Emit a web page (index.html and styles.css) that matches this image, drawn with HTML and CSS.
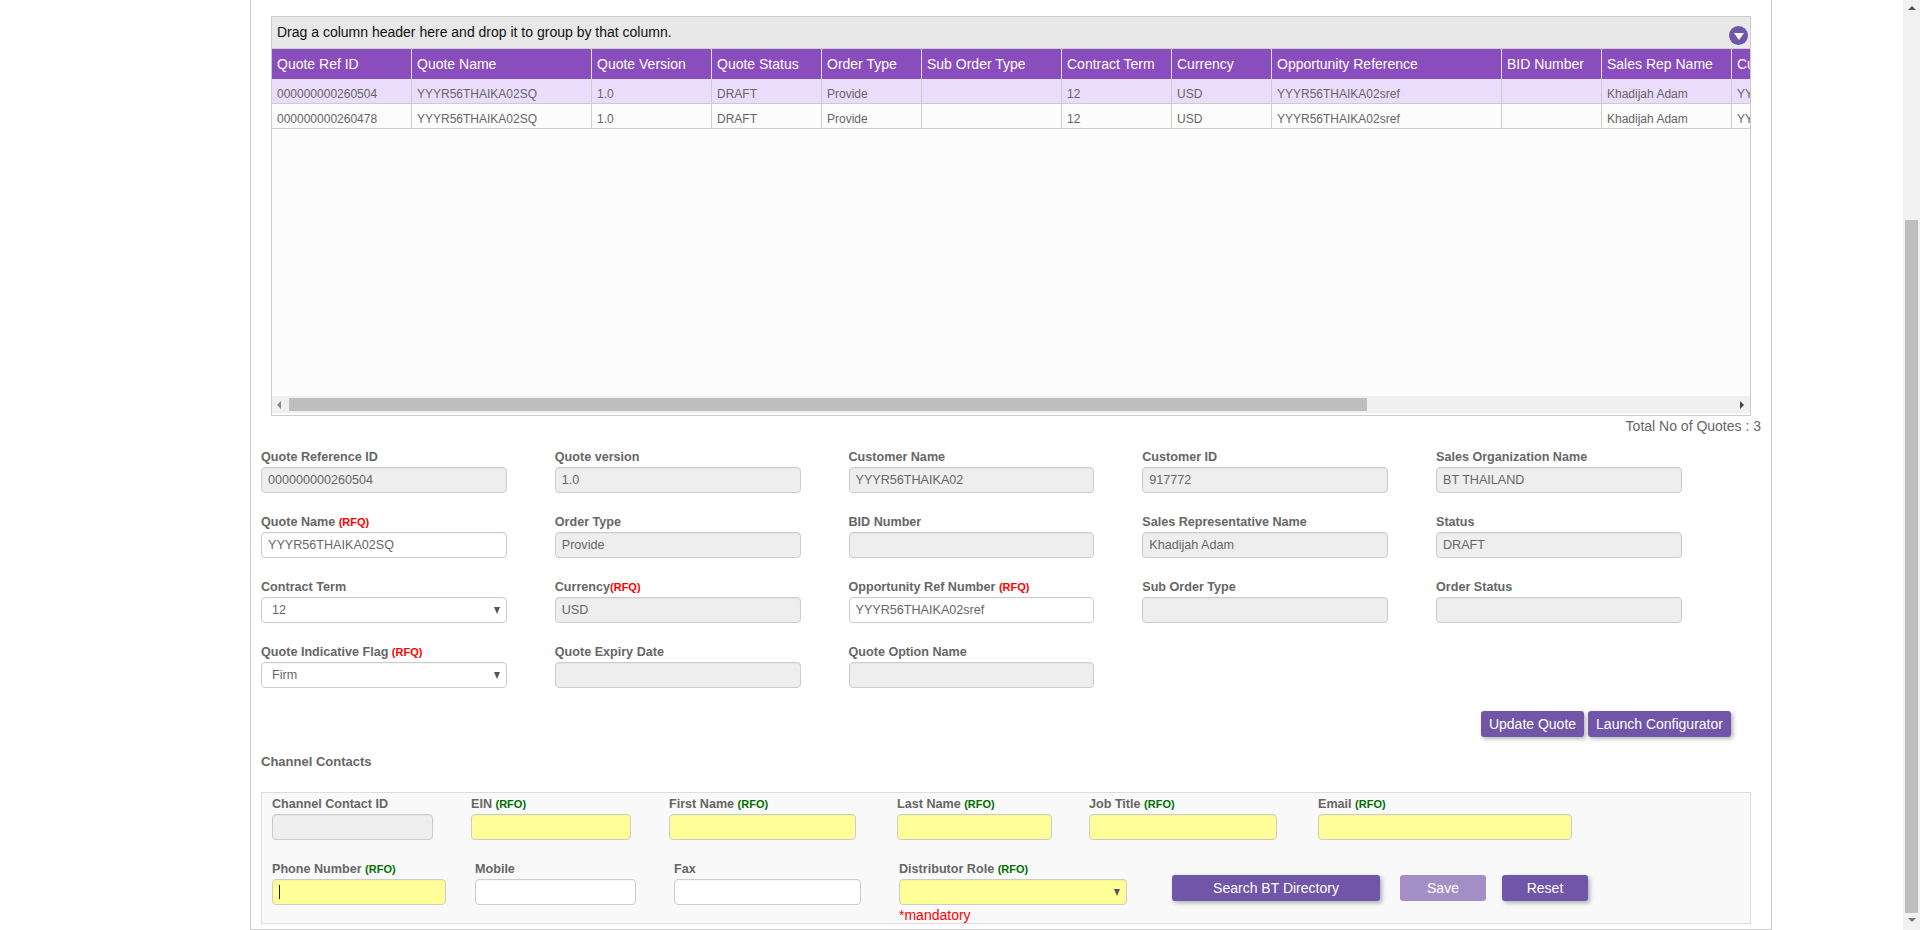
FILE: index.html
```html
<!DOCTYPE html>
<html lang="en">
<head>
<meta charset="utf-8">
<title>Quote Details</title>
<link rel="stylesheet" href="styles.css">
</head>
<body>
<div class="page">
  <main class="sheet">
    <section class="grid">
      <div class="group-panel">Drag a column header here and drop it to group by that column.<span class="collapse"><i></i></span></div>
      <div class="table-wrap">
        <table class="quotes">
          <colgroup>
            <col class="c140"><col class="c180"><col class="c120"><col class="c110"><col class="c100"><col class="c140"><col class="c110"><col class="c100"><col class="c230"><col class="c100"><col class="c130"><col class="c200">
          </colgroup>
          <thead>
            <tr><th>Quote Ref ID</th><th>Quote Name</th><th>Quote Version</th><th>Quote Status</th><th>Order Type</th><th>Sub Order Type</th><th>Contract Term</th><th>Currency</th><th>Opportunity Reference</th><th>BID Number</th><th>Sales Rep Name</th><th>Customer Name</th></tr>
          </thead>
          <tbody>
            <tr class="selected"><td>000000000260504</td><td>YYYR56THAIKA02SQ</td><td>1.0</td><td>DRAFT</td><td>Provide</td><td></td><td>12</td><td>USD</td><td>YYYR56THAIKA02sref</td><td></td><td>Khadijah Adam</td><td>YYYR56THAIKA02</td></tr>
            <tr><td>000000000260478</td><td>YYYR56THAIKA02SQ</td><td>1.0</td><td>DRAFT</td><td>Provide</td><td></td><td>12</td><td>USD</td><td>YYYR56THAIKA02sref</td><td></td><td>Khadijah Adam</td><td>YYYR56THAIKA02</td></tr>
          </tbody>
        </table>
      </div>
      <div class="hscroll">
        <span class="arrow-left"></span>
        <span class="hthumb"></span>
        <span class="arrow-right"></span>
      </div>
    </section>
    <p class="total">Total No of Quotes : 3</p>

    <form class="quote-form">
      <div class="field"><label>Quote Reference ID</label><input class="box" disabled value="000000000260504"></div>
      <div class="field"><label>Quote version</label><input class="box" disabled value="1.0"></div>
      <div class="field"><label>Customer Name</label><input class="box" disabled value="YYYR56THAIKA02"></div>
      <div class="field"><label>Customer ID</label><input class="box" disabled value="917772"></div>
      <div class="field"><label>Sales Organization Name</label><input class="box" disabled value="BT THAILAND"></div>

      <div class="field"><label>Quote Name <em class="rfq">(RFQ)</em></label><input class="box" value="YYYR56THAIKA02SQ"></div>
      <div class="field"><label>Order Type</label><input class="box" disabled value="Provide"></div>
      <div class="field"><label>BID Number</label><input class="box" disabled value=""></div>
      <div class="field"><label>Sales Representative Name</label><input class="box" disabled value="Khadijah Adam"></div>
      <div class="field"><label>Status</label><input class="box" disabled value="DRAFT"></div>

      <div class="field"><label>Contract Term</label><div class="select-wrap"><select class="box pick"><option>12</option></select></div></div>
      <div class="field"><label>Currency<em class="rfq">(RFQ)</em></label><input class="box" disabled value="USD"></div>
      <div class="field"><label>Opportunity Ref Number <em class="rfq">(RFQ)</em></label><input class="box" value="YYYR56THAIKA02sref"></div>
      <div class="field"><label>Sub Order Type</label><input class="box" disabled value=""></div>
      <div class="field"><label>Order Status</label><input class="box" disabled value=""></div>

      <div class="field"><label>Quote Indicative Flag <em class="rfq">(RFQ)</em></label><div class="select-wrap"><select class="box pick"><option>Firm</option></select></div></div>
      <div class="field"><label>Quote Expiry Date</label><input class="box" disabled value=""></div>
      <div class="field"><label>Quote Option Name</label><input class="box" disabled value=""></div>
    </form>

    <div class="form-actions">
      <button type="button" class="btn btn-update">Update Quote</button>
      <button type="button" class="btn btn-launch">Launch Configurator</button>
    </div>

    <h3 class="section-title">Channel Contacts</h3>

    <section class="contacts">
      <div class="contact-row">
        <div class="cfield w-id"><label>Channel Contact ID</label><input class="box" disabled value=""></div>
        <div class="cfield w-ein"><label>EIN <em class="rfo">(RFO)</em></label><input class="box req" value=""></div>
        <div class="cfield w-first"><label>First Name <em class="rfo">(RFO)</em></label><input class="box req" value=""></div>
        <div class="cfield w-last"><label>Last Name <em class="rfo">(RFO)</em></label><input class="box req" value=""></div>
        <div class="cfield w-job"><label>Job Title <em class="rfo">(RFO)</em></label><input class="box req" value=""></div>
        <div class="cfield w-email"><label>Email <em class="rfo">(RFO)</em></label><input class="box req" value=""></div>
      </div>
      <div class="contact-row">
        <div class="cfield w-phone"><label>Phone Number <em class="rfo">(RFO)</em></label><div class="caret-wrap"><input class="box req" value=""><span class="caret"></span></div></div>
        <div class="cfield w-mobile"><label>Mobile</label><input class="box" value=""></div>
        <div class="cfield w-fax"><label>Fax</label><input class="box" value=""></div>
        <div class="cfield w-role"><label>Distributor Role <em class="rfo">(RFO)</em></label><div class="select-wrap"><select class="box pick req"><option></option></select></div><span class="mandatory">*mandatory</span></div>
        <div class="contact-actions">
          <button type="button" class="btn btn-search">Search BT Directory</button>
          <button type="button" class="btn btn-save">Save</button>
          <button type="button" class="btn btn-reset">Reset</button>
        </div>
      </div>
    </section>
  </main>
  <aside class="vscroll">
    <span class="arrow-up"></span>
    <span class="vthumb"></span>
    <span class="arrow-down"></span>
  </aside>
</div>
</body>
</html>
```
FILE: styles.css
```css
* { box-sizing: border-box; }
html, body { margin: 0; height: 930px; overflow: hidden; background: #fff; }
body { font-family: "Liberation Sans", Arial, sans-serif; color: #666; }

.page { display: flex; height: 930px; padding-left: 250px; }
.sheet {
  width: 1522px; height: 930px; flex: none;
  border: 1px solid #ccc; border-top: 0;
  padding: 16px 10px 0;
}

/* grid */
.grid {
  margin-left: 10px; height: 400px; width: 1480px;
  border: 1px solid #ccc; background: #fcfcfc;
  display: flex; flex-direction: column; position: relative;
}
.group-panel {
  height: 32px; flex: none; background: #e8e8e8; color: #111;
  font-size: 14px; line-height: 31px; padding-left: 5px;
  border-bottom: 1px solid #ccc;
}
.collapse {
  position: absolute; top: 9px; right: 2px; width: 19px; height: 19px; border-radius: 50%;
  background: #7055a8; display: flex; align-items: center; justify-content: center;
}
.collapse i { width: 0; height: 0; border-left: 5px solid transparent; border-right: 5px solid transparent; border-top: 7px solid #fff; margin-top: 1px; }
.table-wrap { flex: 1; overflow: hidden; }
.quotes { table-layout: fixed; width: 1660px; border-collapse: separate; border-spacing: 0; }
.c100 { width: 100px; } .c110 { width: 110px; } .c120 { width: 120px; } .c130 { width: 130px; }
.c140 { width: 140px; } .c180 { width: 180px; } .c200 { width: 200px; } .c230 { width: 230px; }
.quotes th {
  height: 30px; background: #8a4dbd; color: #fff; font-size: 14px; font-weight: 400;
  text-align: left; padding: 0 0 0 5px; border-right: 1px solid #ddd; white-space: nowrap; overflow: hidden;
}
.quotes td {
  height: 25px; font-size: 12px; color: #666; padding: 6px 0 0 5px;
  border-right: 1px solid #ccc; border-bottom: 1px solid #ccc; white-space: nowrap; overflow: hidden;
}
.selected td { background: #ecdcfb; }
.hscroll {
  flex: none; height: 17px; margin-bottom: 2px; background: #f0f0f0;
  display: flex; align-items: center; position: relative;
}
.arrow-left { width: 0; height: 0; margin-left: 5px; border-top: 4px solid transparent; border-bottom: 4px solid transparent; border-right: 4px solid #888; }
.hthumb { width: 1078px; height: 13px; margin-left: 8px; background: #bebebe; }
.arrow-right { width: 0; height: 0; margin-left: auto; margin-right: 6px; border-top: 4px solid transparent; border-bottom: 4px solid transparent; border-left: 4px solid #444; }

.total { margin: 0; height: 20px; line-height: 20px; font-size: 14px; text-align: right; color: #666; }

/* form */
.quote-form {
  margin-top: 11px;
  display: grid; grid-template-columns: repeat(5, 245.75px); column-gap: 48px; row-gap: 19px;
  padding-bottom: 19px;
}
label { display: block; height: 20px; line-height: 20px; font-size: 12.6px; font-weight: 700; color: #666; white-space: nowrap; }
em { font-style: normal; font-size: 11px; font-weight: 700; }
.rfq { color: #f00; }
.rfo { color: #007000; }
.box {
  display: block; width: 100%; height: 26px; margin: 0;
  border: 1px solid #ccc; border-radius: 4px; background: #fff;
  font: 12.6px "Liberation Sans", Arial, sans-serif; color: #666; padding: 0 6px;
  box-shadow: inset 0 1px 1px rgba(0,0,0,.04); outline: 0;
}
.box:disabled { background: #eee; color: #666; opacity: 1; }
.req { background: #ff9; }
.pick { appearance: none; -webkit-appearance: none; padding-left: 10px; }
.select-wrap { position: relative; }
.select-wrap::after {
  content: ""; position: absolute; right: 7px; top: 10px; width: 0; height: 0;
  border-left: 3px solid transparent; border-right: 3px solid transparent; border-top: 7px solid #555;
}
.caret-wrap { position: relative; }
.caret { position: absolute; left: 7px; top: 6px; width: 1px; height: 14px; background: #222; }

.form-actions { margin-top: 4px; display: flex; justify-content: flex-end; gap: 4px; padding-right: 30px; }
.btn {
  height: 26px; padding: 0; border: 0; border-radius: 3px; background: #7055a8; color: #fff;
  font: 14px "Liberation Sans", Arial, sans-serif; box-shadow: 2px 2px 4px rgba(0,0,0,.3);
}
.btn-update { width: 103px; }
.btn-launch { width: 143px; }

.section-title { margin: 14px 0 21px; height: 20px; line-height: 22px; font-size: 13px; font-weight: 700; color: #666; }

/* contacts */
.contacts {
  margin-right: 10px; height: 132px; border: 1px solid #ddd; background: #f9f9f9;
  padding: 1px 0 0 10px;
}
.contact-row { display: flex; height: 46px; margin-bottom: 19px; }
.cfield { flex: none; position: relative; }
.w-id { width: 161px; margin-right: 38px; }
.w-ein { width: 160px; margin-right: 38px; }
.w-first { width: 187px; margin-right: 41px; }
.w-last { width: 155px; margin-right: 37px; }
.w-job { width: 188px; margin-right: 41px; }
.w-email { width: 254px; }
.w-phone { width: 174px; margin-right: 29px; }
.w-mobile { width: 161px; margin-right: 38px; }
.w-fax { width: 187px; margin-right: 38px; }
.w-role { width: 228px; margin-right: 45px; }
.mandatory { position: absolute; left: 0; top: 46px; line-height: 20px; font-size: 14px; color: #f00; white-space: nowrap; }
.contact-actions { display: flex; gap: 16px; padding-top: 16px; }
.btn-search { width: 208px; margin-right: 4px; }
.btn-save { width: 86px; background: #a38fc5; box-shadow: none; }
.btn-reset { width: 86px; }

/* page scrollbar */
.vscroll {
  position: fixed; top: 0; right: 0; width: 17px; height: 930px; background: #f1f1f1;
  display: flex; flex-direction: column; align-items: center;
}
.arrow-up { width: 0; height: 0; margin-top: 6px; border-left: 4px solid transparent; border-right: 4px solid transparent; border-bottom: 4px solid #555; }
.vthumb { width: 13px; height: 693px; margin-top: 210px; background: #bebebe; }
.arrow-down { width: 0; height: 0; margin-top: 5px; border-left: 4px solid transparent; border-right: 4px solid transparent; border-top: 4px solid #777; }
```
